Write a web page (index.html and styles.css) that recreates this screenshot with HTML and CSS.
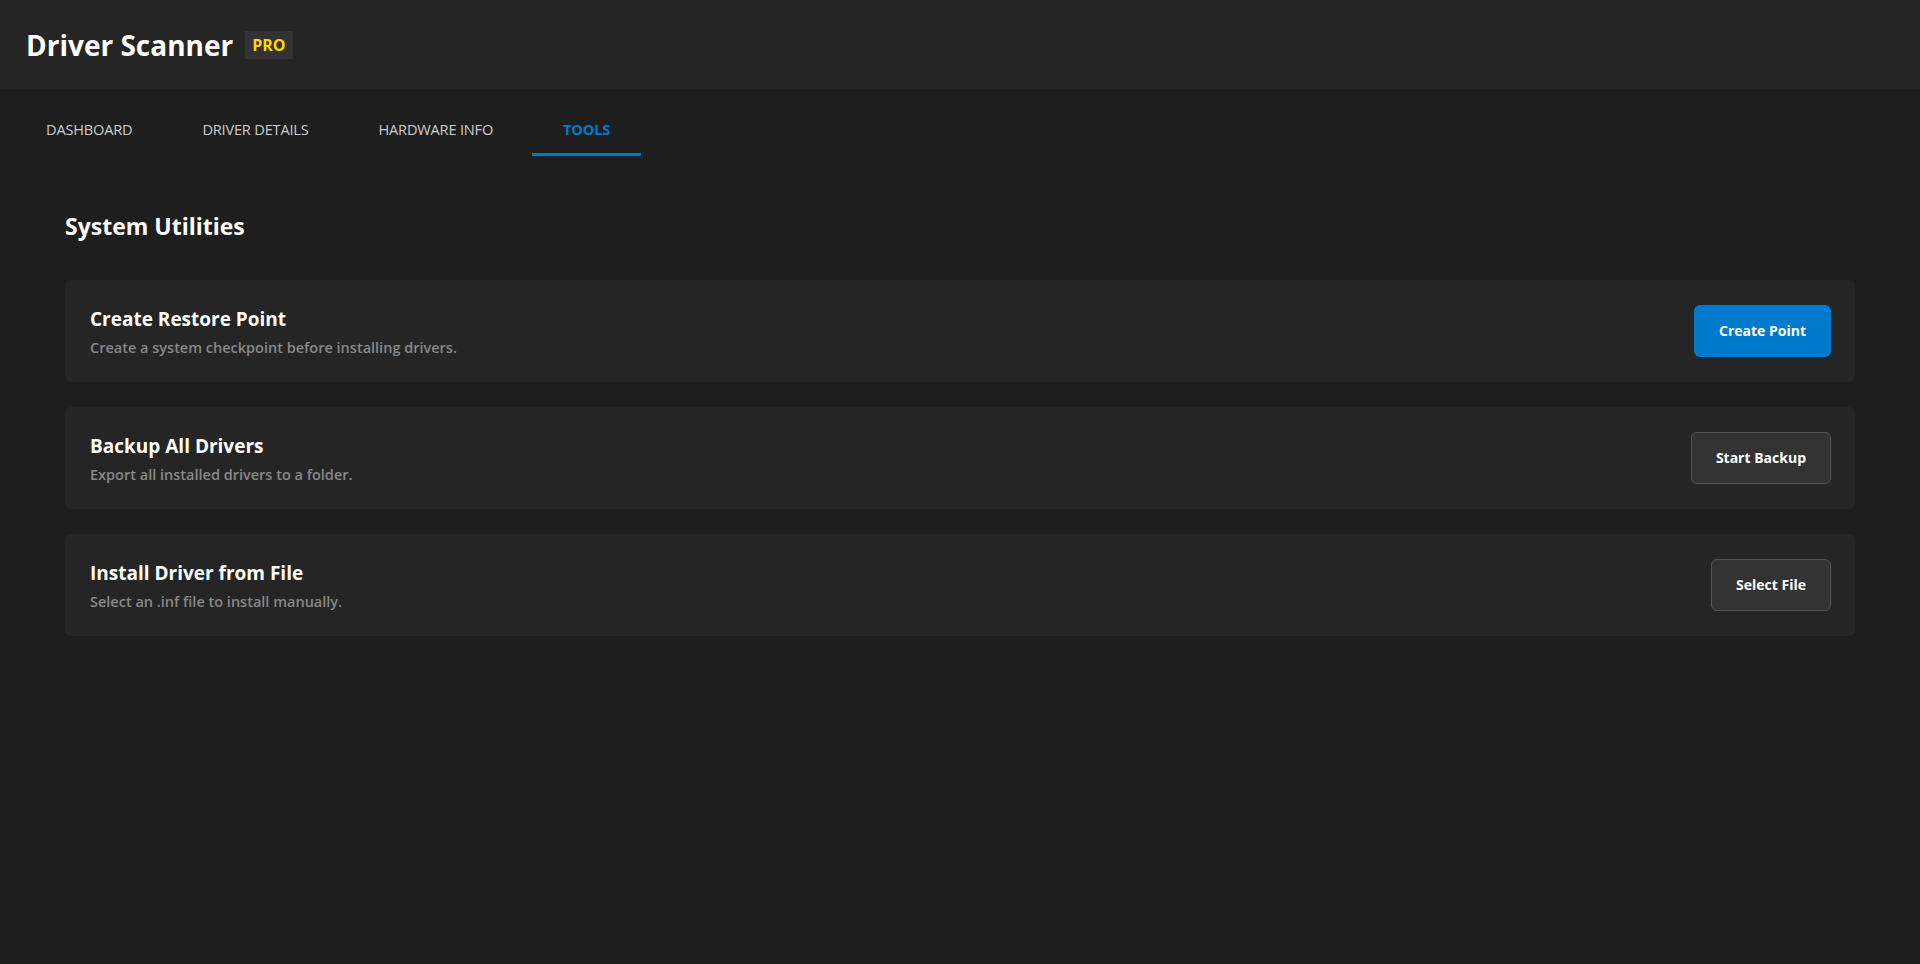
FILE: index.html
```html
<!DOCTYPE html>
<html lang="en">
<head>
<meta charset="utf-8">
<title>Driver Scanner</title>
<link rel="stylesheet" href="styles.css">
</head>
<body>
<header class="app-header">
  <h1 class="brand">Driver Scanner</h1>
  <span class="badge">PRO</span>
</header>
<nav class="tabs">
  <a class="tab">DASHBOARD</a>
  <a class="tab">DRIVER DETAILS</a>
  <a class="tab">HARDWARE INFO</a>
  <a class="tab active">TOOLS</a>
</nav>
<main class="content">
  <h2 class="section-title">System Utilities</h2>
  <div class="cards">
    <div class="card">
      <div class="card-text">
        <div class="card-title">Create Restore Point</div>
        <div class="card-desc">Create a system checkpoint before installing drivers.</div>
      </div>
      <button class="btn btn-primary">Create Point</button>
    </div>
    <div class="card">
      <div class="card-text">
        <div class="card-title">Backup All Drivers</div>
        <div class="card-desc">Export all installed drivers to a folder.</div>
      </div>
      <button class="btn btn-secondary">Start Backup</button>
    </div>
    <div class="card">
      <div class="card-text">
        <div class="card-title">Install Driver from File</div>
        <div class="card-desc">Select an .inf file to install manually.</div>
      </div>
      <button class="btn btn-secondary">Select File</button>
    </div>
  </div>
</main>
</body>
</html>
```
FILE: styles.css
```css
* { box-sizing: border-box; }
html, body {
  margin: 0;
  padding: 0;
  background: #1e1e1e;
  color: #ffffff;
  font-family: "Open Sans", "Noto Sans", sans-serif;
  height: 100%;
}
.app-header {
  height: 89px;
  background: #252525;
  display: flex;
  align-items: center;
  padding: 0 26px;
  gap: 12px;
}
.brand {
  margin: 0;
  font-size: 28px;
  font-weight: 700;
  line-height: 36px;
}
.badge {
  background: #333333;
  color: #ffd700;
  font-weight: 700;
  font-size: 16px;
  line-height: 20px;
  padding: 4px 7px;
}
.tabs {
  display: flex;
  padding: 11px 15px 0;
  gap: 8px;
}
.tab {
  font-size: 14.6px;
  line-height: 20px;
  color: #cccccc;
  padding: 19px 31px 14px;
  border-bottom: 3px solid transparent;
  letter-spacing: -0.2px;
}
.tab.active {
  color: #007acc;
  font-weight: 700;
  border-bottom-color: #007acc;
}
.content {
  padding: 54px 65px 0;
}
.section-title {
  margin: 0 0 38px;
  font-size: 23px;
  line-height: 32px;
  font-weight: 700;
}
.cards {
  display: flex;
  flex-direction: column;
  gap: 25px;
}
.card {
  background: #252525;
  border-radius: 6px;
  padding: 24px 24px 24px 25px;
  display: flex;
  align-items: center;
  justify-content: space-between;
}
.card-text {
  display: flex;
  flex-direction: column;
  padding-top: 2px;
  gap: 6px;
}
.card-title {
  font-size: 19px;
  line-height: 26px;
  font-weight: 700;
}
.card-desc {
  font-size: 14.5px;
  line-height: 20px;
  font-weight: 600;
  color: #888888;
}
.btn {
  font-family: inherit;
  font-size: 14px;
  font-weight: 700;
  line-height: 20px;
  color: #ffffff;
  border-radius: 6px;
  padding: 16px 25px;
  cursor: pointer;
}
.btn-primary {
  background: #007acc;
  border: none;
}
.btn-secondary {
  background: #333333;
  border: 1px solid #555555;
  padding: 15px 24px;
}
```
